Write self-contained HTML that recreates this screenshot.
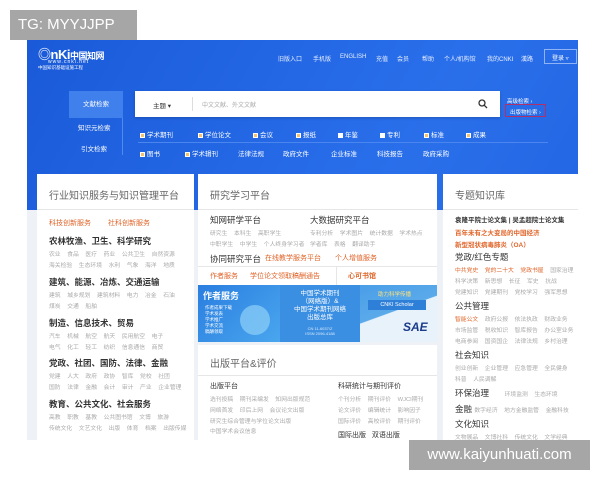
<!DOCTYPE html>
<html><head><meta charset="utf-8"><style>
*{margin:0;padding:0;box-sizing:border-box}
body{width:600px;height:480px;background:#fff;position:relative;overflow:hidden;font-family:"Liberation Sans","Noto Sans CJK SC",sans-serif;}
.a{position:absolute;white-space:nowrap}
.blue{position:absolute;left:27px;top:40px;width:551px;height:170px;background:linear-gradient(120deg,#1a5ad8 0%,#2468e6 45%,#2a6fea 70%,#2366e4 100%)}
.w{color:#fff}
.nav{font-size:6px;color:#e8f0ff;top:54px}
.cb{font-size:6.5px;color:#fff}
.cb i{display:inline-block;width:5px;height:5px;background:#f5c26b;margin-right:2px;vertical-align:middle;border:1px solid #fff}
.cb i.e{background:#fff}
.panel{position:absolute;background:#fff;top:174px;height:266px}
.ph{font-size:10px;color:#666}
.h{font-size:8.5px;color:#333;font-weight:bold}
.s{font-size:5.8px;color:#aaa;word-spacing:5px}
.o{font-size:7px;color:#e0652a;font-weight:bold}
.ln{position:absolute;background:#e6e6e6;height:1px}
</style></head><body>
<div class="a" style="left:10px;top:10px;width:127px;height:30px;background:#a6a6a6;color:#fff;font-size:15px;line-height:30px;padding-left:8px">TG: MYYJJPP</div>

<div class="blue"></div>
<div class="a" style="left:27px;top:210px;width:551px;height:230px;background:#eef1f5"></div>
<div class="a w" style="left:38px;top:44px;font-size:13px;font-weight:bold;letter-spacing:-0.5px">◎nKi<span style="font-size:9px">中国知网</span></div>
<div class="a w" style="left:48px;top:59px;font-size:5px;letter-spacing:1px">www.cnki.net</div>
<div class="a w" style="left:38px;top:65px;font-size:4.5px">中国知识基础设施工程</div>
<div class="a nav" style="left:278px">旧版入口</div>
<div class="a nav" style="left:313px">手机版</div>
<div class="a nav" style="left:340px">ENGLISH</div>
<div class="a nav" style="left:376px">充值</div>
<div class="a nav" style="left:397px">会员</div>
<div class="a nav" style="left:422px">帮助</div>
<div class="a nav" style="left:444px">个人/机构馆</div>
<div class="a nav" style="left:487px">我的CNKI</div>
<div class="a nav" style="left:521px">漢路</div>
<div class="a" style="left:544px;top:49px;width:33px;height:15px;border:1px solid #8fb3f5;font-size:6px;color:#fff;padding:3px 0 0 7px">登录 ▿</div>

<div class="a" style="left:69px;top:91px;width:54px;height:27px;background:#3f80ec;font-size:6.5px;color:#fff;text-align:center;line-height:27px">文献检索</div>
<div class="a" style="left:122px;top:118px;width:1px;height:37px;background:#4f8aee"></div>
<div class="a cb" style="left:78px;top:122px">知识元检索</div>
<div class="a cb" style="left:81px;top:143px">引文检索</div>
<div class="a" style="left:135px;top:91px;width:365px;height:26px;background:#fff;box-shadow:0 1px 3px rgba(0,0,0,.2)"></div>
<div class="a" style="left:153px;top:100px;font-size:6.5px;color:#333">主题 ▾</div>
<div class="a" style="left:192px;top:97px;width:1px;height:14px;background:#ddd"></div>
<div class="a" style="left:202px;top:100px;font-size:6px;color:#aaa">中文文献、外文文献</div>
<svg class="a" style="left:478px;top:99px" width="10" height="10"><circle cx="4" cy="4" r="3" fill="none" stroke="#333" stroke-width="1.3"/><line x1="6.3" y1="6.3" x2="9" y2="9" stroke="#333" stroke-width="1.3"/></svg>
<div class="a cb" style="left:507px;top:97px;font-size:5.5px">高级检索 ›</div>
<div class="a" style="left:505px;top:104px;width:41px;height:13px;border:1.5px solid #b0306a"></div>
<div class="a cb" style="left:510px;top:108px;font-size:5.5px">出版物检索 ›</div>

<div class="a cb" style="left:140px;top:129px"><i></i>学术期刊</div>
<div class="a cb" style="left:198px;top:129px"><i></i>学位论文</div>
<div class="a cb" style="left:253px;top:129px"><i></i>会议</div>
<div class="a cb" style="left:296px;top:129px"><i></i>报纸</div>
<div class="a cb" style="left:338px;top:129px"><i class="e"></i>年鉴</div>
<div class="a cb" style="left:380px;top:129px"><i class="e"></i>专利</div>
<div class="a cb" style="left:424px;top:129px"><i></i>标准</div>
<div class="a cb" style="left:466px;top:129px"><i></i>成果</div>
<div class="a" style="left:138px;top:142px;width:410px;height:1px;background:#4a86ee"></div>
<div class="a cb" style="left:140px;top:148px"><i></i>图书</div>
<div class="a cb" style="left:185px;top:148px"><i></i>学术辑刊</div>
<div class="a cb" style="left:238px;top:148px">法律法规</div>
<div class="a cb" style="left:283px;top:148px">政府文件</div>
<div class="a cb" style="left:331px;top:148px">企业标准</div>
<div class="a cb" style="left:377px;top:148px">科技报告</div>
<div class="a cb" style="left:423px;top:148px">政府采购</div>

<!-- panel 1 -->
<div class="panel" style="left:37px;width:157px"></div>
<div class="a ph" style="left:49px;top:187px">行业知识服务与知识管理平台</div>
<div class="ln a" style="left:37px;top:209px;width:157px"></div>
<div class="a o" style="left:49px;top:218px;font-weight:normal">科技创新服务</div>
<div class="a o" style="left:108px;top:218px;font-weight:normal">社科创新服务</div>
<div class="a h" style="left:49px;top:235px">农林牧渔、卫生、科学研究</div>
<div class="a s" style="left:49px;top:249px">农业 食品 医疗 药业 公共卫生 自然资源</div>
<div class="a s" style="left:49px;top:260px">海关检验 生态环境 水利 气象 海洋 地质</div>
<div class="a h" style="left:49px;top:276px">建筑、能源、冶炼、交通运输</div>
<div class="a s" style="left:49px;top:290px">建筑 城乡规划 建筑材料 电力 冶金 石油</div>
<div class="a s" style="left:49px;top:301px">煤炭 交通 船舶</div>
<div class="a h" style="left:49px;top:317px">制造、信息技术、贸易</div>
<div class="a s" style="left:49px;top:331px">汽车 机械 航空 航天 民用航空 电子</div>
<div class="a s" style="left:49px;top:342px">电气 化工 轻工 纺织 信息通信 商贸</div>
<div class="a h" style="left:49px;top:357px">党政、社团、国防、法律、金融</div>
<div class="a s" style="left:49px;top:371px">党建 人大 政府 政协 智库 党校 社团</div>
<div class="a s" style="left:49px;top:382px">国防 法律 金融 会计 审计 产业 企业管理</div>
<div class="a h" style="left:49px;top:398px">教育、公共文化、社会服务</div>
<div class="a s" style="left:49px;top:412px">高教 职教 基教 公共图书馆 文博 旅游</div>
<div class="a s" style="left:49px;top:423px">传统文化 文艺文化 出版 体育 档案 出版传媒</div>

<!-- panel 2 -->
<div class="panel" style="left:198px;width:239px"></div>
<div class="a ph" style="left:210px;top:187px">研究学习平台</div>
<div class="ln a" style="left:198px;top:209px;width:239px"></div>
<div class="a h" style="left:210px;top:214px;font-weight:normal">知网研学平台</div>
<div class="a h" style="left:310px;top:214px;font-weight:normal">大数据研究平台</div>
<div class="a s" style="left:210px;top:228px">研究生 本科生 高职学生</div>
<div class="a s" style="left:310px;top:228px">专利分析 学术图片 统计数据 学术热点</div>
<div class="a s" style="left:210px;top:239px">中职学生 中学生 个人终身学习者</div>
<div class="a s" style="left:310px;top:239px">学者库 表格 翻译助手</div>
<div class="a h" style="left:210px;top:253px;font-weight:normal">协同研究平台</div>
<div class="a o" style="left:265px;top:253px;font-weight:normal">在线教学服务平台</div>
<div class="a o" style="left:335px;top:253px;font-weight:normal">个人增值服务</div>
<div class="ln a" style="left:198px;top:266px;width:239px"></div>
<div class="a o" style="left:210px;top:271px;font-weight:normal">作者服务</div>
<div class="a o" style="left:250px;top:271px;font-weight:normal">学位论文领取稿酬通告</div>
<div class="a" style="left:336px;top:266px;width:1px;height:19px;background:#e6e6e6"></div>
<div class="a o" style="left:348px;top:271px">心可书馆</div>
<div class="a" style="left:198px;top:285px;width:82px;height:57px;background:linear-gradient(135deg,#2a7ee0,#4aa6ee)"></div>
<div class="a w" style="left:203px;top:289px;font-size:9px;font-weight:bold">作者服务</div>
<div class="a w" style="left:205px;top:305px;font-size:4.5px;line-height:6px">作者成果下载<br>学术发表<br>学术推广<br>学术交流<br>稿酬领取</div>
<div class="a" style="left:240px;top:305px;width:30px;height:30px;border-radius:50%;background:#8fd0f8;opacity:.7"></div>
<div class="a" style="left:280px;top:285px;width:80px;height:57px;background:#3b8fe2"></div>
<div class="a w" style="left:283px;top:290px;width:74px;text-align:center;font-size:6.5px;line-height:8px">中国学术期刊<br>（网络版）&amp;<br>中国学术期刊网络<br>出版总库</div>
<div class="a w" style="left:283px;top:326px;width:74px;text-align:center;font-size:4px;line-height:5px;opacity:.8">CN 11-6037/Z<br>ISSN 2096-4188</div>
<div class="a" style="left:360px;top:285px;width:77px;height:57px;background:linear-gradient(160deg,#4a9ee8 0%,#5aaaea 45%,#e8f2fb 46%,#e8f2fb 100%)"></div>
<div class="a" style="left:368px;top:300px;width:58px;height:10px;background:#2d7fd8;color:#fff;font-size:5.5px;text-align:center;line-height:10px">CNKI Scholar</div>
<div class="a" style="left:378px;top:290px;font-size:5.5px;color:#ffe27a">助力科学传播</div>
<div class="a" style="left:403px;top:320px;font-size:12px;font-weight:bold;color:#1b3b8a;font-style:italic">SAE</div>
<div class="a" style="left:198px;top:342px;width:239px;height:3px;background:#eef1f5"></div>
<div class="a ph" style="left:210px;top:355px">出版平台&amp;评价</div>
<div class="ln a" style="left:198px;top:375px;width:239px"></div>
<div class="a h" style="left:210px;top:381px;font-weight:normal;font-size:7px">出版平台</div>
<div class="a h" style="left:338px;top:381px;font-weight:normal;font-size:7px">科研统计与期刊评价</div>
<div class="a s" style="left:210px;top:394px">选刊投稿 期刊采编发 知网出版规范</div>
<div class="a s" style="left:210px;top:405px">网络首发 印后上网 会议论文出版</div>
<div class="a s" style="left:210px;top:416px">研究生综合管理与学位论文出版</div>
<div class="a s" style="left:210px;top:426px">中国学术会议信息</div>
<div class="a s" style="left:338px;top:394px">个刊分析 期刊评价 WJCI期刊</div>
<div class="a s" style="left:338px;top:405px">论文评价 编辑统计 影响因子</div>
<div class="a s" style="left:338px;top:416px">国际评价 高校评价 期刊评价</div>
<div class="a h" style="left:338px;top:430px;font-weight:normal;font-size:7px">国际出版 &nbsp;&nbsp;双语出版</div>

<!-- panel 3 -->
<div class="panel" style="left:443px;width:135px"></div>
<div class="a ph" style="left:455px;top:187px">专题知识库</div>
<div class="ln a" style="left:443px;top:209px;width:135px"></div>
<div class="a h" style="left:455px;top:214px;font-size:6.5px">袁隆平院士论文集 | 吴孟超院士论文集</div>
<div class="a o" style="left:455px;top:227px;font-size:6.5px">百年未有之大变局的中国经济</div>
<div class="a o" style="left:455px;top:239px;font-size:6.5px">新型冠状病毒肺炎（OA）</div>
<div class="a h" style="left:455px;top:251px;font-weight:normal">党政/红色专题</div>
<div class="a s" style="left:455px;top:265px"><span style="color:#e0652a">中共党史 党的二十大 党政书屋</span> 国家治理</div>
<div class="a s" style="left:455px;top:276px">科学决策 新思想 长征 军史 抗战</div>
<div class="a s" style="left:455px;top:287px">党建知识 党建期刊 党校学习 强军思想</div>
<div class="a h" style="left:455px;top:300px;font-weight:normal">公共管理</div>
<div class="a s" style="left:455px;top:314px"><span style="color:#e0652a">智能公文</span> 政府公报 依法执政 财政业务</div>
<div class="a s" style="left:455px;top:325px">市场监管 税收知识 智库报告 办公室业务</div>
<div class="a s" style="left:455px;top:336px">电商参阅 国资国企 法律法规 乡村治理</div>
<div class="a h" style="left:455px;top:349px;font-weight:normal">社会知识</div>
<div class="a s" style="left:455px;top:363px">创业创新 企业管理 应急管理 全民健身</div>
<div class="a s" style="left:455px;top:374px">科普 人民调解</div>
<div class="a h" style="left:455px;top:387px;font-weight:normal">环保治理 <span class="s" style="font-weight:normal">&nbsp; 环境监测 生态环境</span></div>
<div class="a h" style="left:455px;top:403px;font-weight:normal">金融 <span class="s">数字经济 地方金融监管 金融科技</span></div>
<div class="a h" style="left:455px;top:418px;font-weight:normal">文化知识</div>
<div class="a s" style="left:455px;top:432px">文物展品 文博社科 传统文化 文学经典</div>

<div class="a" style="left:0;top:440px;width:600px;height:40px;background:#fff"></div>
<div class="a" style="left:409px;top:440px;width:181px;height:30px;background:#a6a6a6;color:#fff;font-size:15px;line-height:30px;text-align:center">www.kaiyunhuati.com</div>
</body></html>
